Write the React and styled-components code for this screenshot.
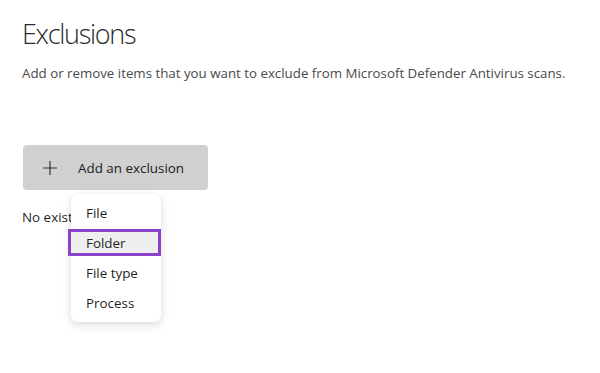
import styled, { createGlobalStyle } from "styled-components"

const Global = createGlobalStyle`
    body {
        margin: 0;
        background: #fff;
        font-family: "Open Sans", "Noto Sans", sans-serif;
        color: #1f1f1f;
    }
`

const Page = styled.div`
    min-height: 373px;
    padding: 16px 22px 0 22px;
    box-sizing: border-box;
`

const Title = styled.h1`
    margin: 0;
    font-size: 27px;
    font-weight: 300;
    letter-spacing: -1.3px;
    color: #2b2b2b;
    line-height: 36px;
`

const Subtitle = styled.p`
    margin: 11px 0 0 0;
    font-size: 13.3px;
    color: #4a4a4a;
    line-height: 20px;
`

const Actions = styled.div`
    position: relative;
    margin-top: 62px;
`

const AddButton = styled.button`
    display: flex;
    align-items: center;
    gap: 21px;
    width: 185px;
    height: 45px;
    margin-left: 1px;
    padding: 0 0 0 20px;
    border: none;
    border-radius: 4px;
    background: #d0d0d0;
    font-family: inherit;
    font-size: 13.4px;
    color: #1c1c1c;
    cursor: pointer;
`

const Empty = styled.div`
    margin-top: 18px;
    font-size: 13.4px;
    color: #1f1f1f;
`

const Menu = styled.div`
    position: absolute;
    left: 49px;
    top: 49px;
    width: 90px;
    padding: 4px 0;
    display: flex;
    flex-direction: column;
    background: #fff;
    border-radius: 6px;
    box-shadow: 0 3px 10px rgba(0, 0, 0, 0.14), 0 0 1px rgba(0, 0, 0, 0.12);
`

const Item = styled.div`
    height: 30px;
    display: flex;
    align-items: center;
    padding-left: 15px;
    font-size: 13.4px;
    color: #1f1f1f;
    box-sizing: border-box;
`

const ActiveItem = styled(Item)`
    height: 27px;
    margin: 1px 0 2px -3px;
    padding-left: 15px;
    background: #efefef;
    border: 3px solid #8c43cc;
`

const Plus = () => (
    <svg width="14" height="14" viewBox="0 0 14 14">
        <path d="M7 0v14M0 7h14" stroke="#333" strokeWidth="1.2" fill="none" />
    </svg>
)

const items = ["File", "Folder", "File type", "Process"]

const App = () => {
    return (
        <Page>
            <Global />
            <Title>Exclusions</Title>
            <Subtitle>Add or remove items that you want to exclude from Microsoft Defender Antivirus scans.</Subtitle>
            <Actions>
                <AddButton>
                    <Plus />
                    Add an exclusion
                </AddButton>
                <Empty>No existing exclusions</Empty>
                <Menu>
                    {items.map(i =>
                        i === "Folder"
                            ? <ActiveItem key={i}>{i}</ActiveItem>
                            : <Item key={i}>{i}</Item>
                    )}
                </Menu>
            </Actions>
        </Page>
    )
}

export default App
